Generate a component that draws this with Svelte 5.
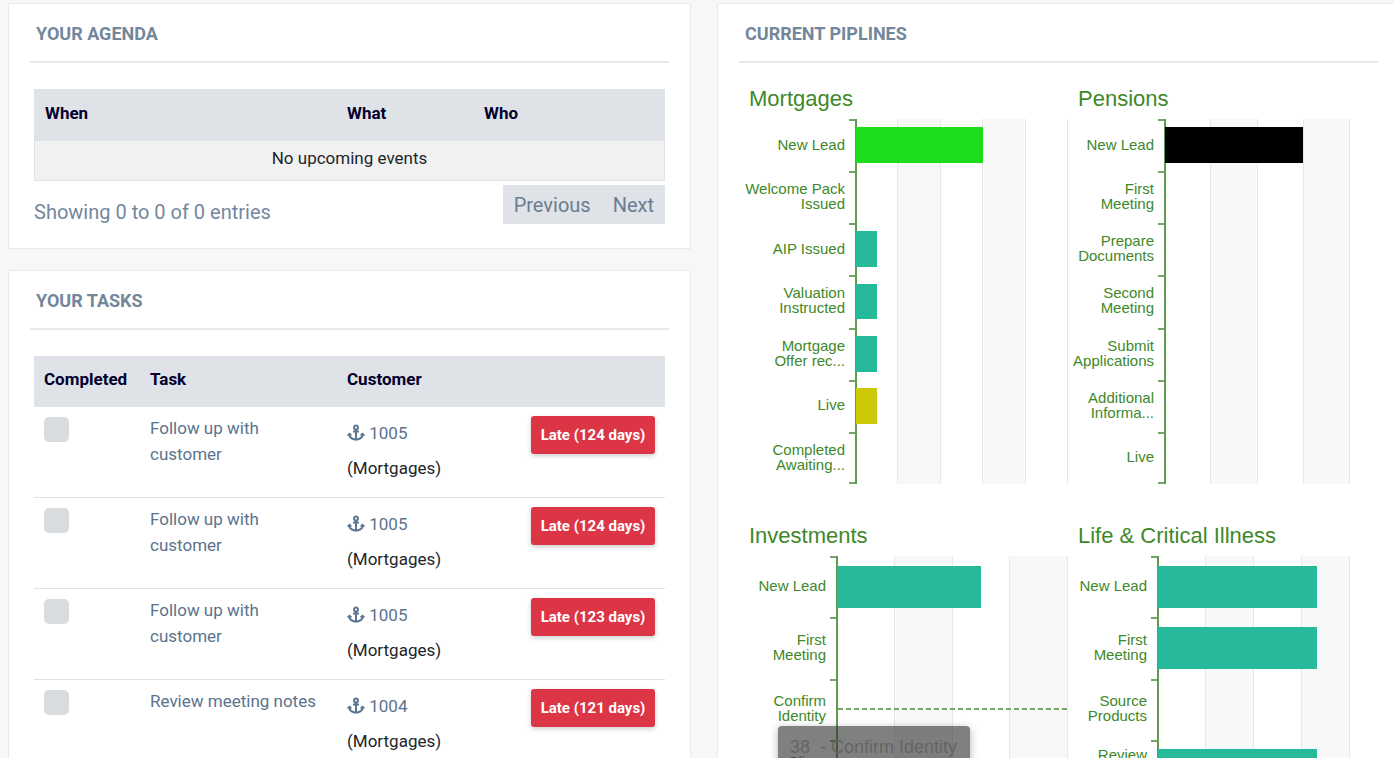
<script lang="ts">
  interface Category {
    label: string[];
    value: number;
    color?: string;
  }

  interface Pipeline {
    title: string;
    // width of the label column, px
    labelWidth: number;
    height: number;
    bands: number;
    max: number;
    categories: Category[];
    hovered?: number;
  }

  const tasks = [
    { id: 1, task: 'Follow up with customer', customer: '1005', type: 'Mortgages', late: 124 },
    { id: 2, task: 'Follow up with customer', customer: '1005', type: 'Mortgages', late: 124 },
    { id: 3, task: 'Follow up with customer', customer: '1005', type: 'Mortgages', late: 123 },
    { id: 4, task: 'Review meeting notes', customer: '1004', type: 'Mortgages', late: 121 }
  ];

  const pipelines: Pipeline[] = [
    {
      title: 'Mortgages',
      labelWidth: 116,
      height: 365,
      bands: 5,
      max: 10,
      categories: [
        { label: ['New Lead'], value: 6, color: '#1cdc1e' },
        { label: ['Welcome Pack', 'Issued'], value: 0 },
        { label: ['AIP Issued'], value: 1 },
        { label: ['Valuation', 'Instructed'], value: 1 },
        { label: ['Mortgage', 'Offer rec...'], value: 1 },
        { label: ['Live'], value: 1, color: '#ccc806' },
        { label: ['Completed', 'Awaiting...'], value: 0 }
      ]
    },
    {
      title: 'Pensions',
      labelWidth: 96,
      height: 365,
      bands: 4,
      max: 4,
      categories: [
        { label: ['New Lead'], value: 3, color: '#000' },
        { label: ['First', 'Meeting'], value: 0 },
        { label: ['Prepare', 'Documents'], value: 0 },
        { label: ['Second', 'Meeting'], value: 0 },
        { label: ['Submit', 'Applications'], value: 0 },
        { label: ['Additional', 'Informa...'], value: 0 },
        { label: ['Live'], value: 0 }
      ]
    },
    {
      title: 'Investments',
      labelWidth: 97,
      height: 245,
      bands: 4,
      max: 8,
      categories: [
        { label: ['New Lead'], value: 5 },
        { label: ['First', 'Meeting'], value: 0 },
        { label: ['Confirm', 'Identity'], value: 0 },
        { label: ['Client', 'Review'], value: 0 }
      ],
      hovered: 2
    },
    {
      title: 'Life & Critical Illness',
      labelWidth: 89,
      height: 245,
      bands: 4,
      max: 12,
      categories: [
        { label: ['New Lead'], value: 10 },
        { label: ['First', 'Meeting'], value: 10 },
        { label: ['Source', 'Products'], value: 0 },
        { label: ['Review', 'with', 'Client'], value: 10 }
      ]
    }
  ];
</script>

<main class="dashboard">
  <div class="column">
    <section class="panel">
      <h2>YOUR AGENDA</h2>
      <div class="panel-body">
        <table class="agenda">
          <thead>
            <tr>
              <th class="col-when">When</th>
              <th class="col-what">What</th>
              <th>Who</th>
            </tr>
          </thead>
          <tbody>
            <tr>
              <td colspan="3">No upcoming events</td>
            </tr>
          </tbody>
        </table>
        <div class="table-footer">
          <span class="info">Showing 0 to 0 of 0 entries</span>
          <nav class="pager" aria-label="Agenda pages">
            <button type="button">Previous</button>
            <button type="button">Next</button>
          </nav>
        </div>
      </div>
    </section>

    <section class="panel">
      <h2>YOUR TASKS</h2>
      <div class="panel-body">
        <table class="tasks">
          <thead>
            <tr>
              <th class="col-done">Completed</th>
              <th class="col-task">Task</th>
              <th class="col-customer">Customer</th>
              <th class="col-late"></th>
            </tr>
          </thead>
          <tbody>
            {#each tasks as item (item.id)}
              <tr>
                <td><input type="checkbox" aria-label="Completed" /></td>
                <td class="task-cell"><a href="#task-{item.id}">{item.task}</a></td>
                <td class="customer-cell">
                  <a href="#customer-{item.customer}">
                    <svg class="anchor" viewBox="0 0 576 512" aria-hidden="true">
                      <path
                        fill="currentColor"
                        d="M12.971 352h32.394C67.172 454.735 181.944 512 288 512c106.229 0 220.853-57.38 242.635-160h32.394c10.691 0 16.045-12.926 8.485-20.485l-67.029-67.029c-4.686-4.686-12.284-4.686-16.971 0l-67.029 67.029c-7.56 7.56-2.206 20.485 8.485 20.485h35.146c-20.29 54.317-84.963 86.588-144.117 94.015V256h52c6.627 0 12-5.373 12-12v-40c0-6.627-5.373-12-12-12h-52v-5.47c37.281-13.226 63.995-48.819 64-90.541C384 43.009 339.889-.999 285.959.017 233.612 1.003 192 43.665 192 95.999c0 41.721 26.714 77.314 64 90.54V192h-52c-6.627 0-12 5.373-12 12v40c0 6.627 5.373 12 12 12h52v190.015c-58.936-7.399-123.82-39.679-144.117-94.015h35.146c10.691 0 16.045-12.926 8.485-20.485l-67.029-67.029c-4.686-4.686-12.284-4.686-16.971 0L4.485 331.515C-3.074 339.074 2.28 352 12.971 352zM288 64c17.645 0 32 14.355 32 32s-14.355 32-32 32-32-14.355-32-32 14.355-32 32-32z"
                      />
                    </svg>
                    {item.customer}
                  </a>
                  <div>({item.type})</div>
                </td>
                <td>
                  <button type="button" class="late">Late ({item.late} days)</button>
                </td>
              </tr>
            {/each}
          </tbody>
        </table>
      </div>
    </section>
  </div>

  <section class="panel">
    <h2>CURRENT PIPLINES</h2>
    <div class="charts">
      {#each pipelines as chart}
        <figure class="chart">
          <figcaption>{chart.title}</figcaption>
          <div class="chart-area" style="height: {chart.height}px">
            <div class="labels" style="width: {chart.labelWidth}px">
              {#each chart.categories as category}
                <div class="label">
                  {#each category.label as line}
                    <span>{line}</span>
                  {/each}
                </div>
              {/each}
            </div>
            <div class="plot">
              <div class="bands">
                {#each { length: chart.bands } as _}
                  <div class="band"></div>
                {/each}
              </div>
              <div class="bars">
                {#each chart.categories as category, i}
                  <div class="slot" class:hovered={chart.hovered === i}>
                    {#if category.value > 0}
                      <div
                        class="bar"
                        style="width: {(category.value / chart.max) * 100}%; background: {category.color ?? '#26b99a'}"
                      ></div>
                    {/if}
                  </div>
                {/each}
              </div>
            </div>
            {#if chart.hovered !== undefined}
              <div class="tooltip">38&nbsp; - Confirm Identity</div>
            {/if}
          </div>
        </figure>
      {/each}
    </div>
  </section>
</main>

<style>
  :global(body) {
    background: #f7f7f7;
  }

  :global(#app) {
    overflow: hidden;
  }

  .dashboard {
    display: grid;
    grid-template-columns: 1fr 1fr;
    gap: 26px;
    box-sizing: border-box;
    height: 100vh;
    /* the right panel bleeds past the window edge */
    margin-right: -6px;
    padding: 3px 0 0 8px;
    overflow: hidden;
    font-family: Roboto, 'Liberation Sans', sans-serif;
    font-size: 17px;
    line-height: 26px;
    color: #212529;
  }

  .column {
    display: flex;
    flex-direction: column;
    gap: 21px;
    min-width: 0;
  }

  .panel {
    min-width: 0;
    padding: 0 21px;
    background: #fff;
    border: 1px solid #e6e9ed;
  }

  h2 {
    margin: 0;
    padding: 17px 6px 14px;
    border-bottom: 2px solid #e6e9ed;
    font-size: 18px;
    font-weight: 700;
    line-height: 26px;
    color: #73879c;
  }

  .panel-body {
    padding: 26px 4px 23px;
  }

  table {
    width: 100%;
    border-collapse: collapse;
    table-layout: fixed;
  }

  th {
    padding: 10px;
    height: 31px;
    background: #dfe2e7;
    color: #03002e;
    font-weight: 700;
    text-align: left;
    vertical-align: top;
  }

  td {
    padding: 10px;
    vertical-align: top;
  }

  .agenda {
    border: 1px solid #dee2e6;
    margin-bottom: 4px;
  }

  .agenda td {
    padding: 4px 10px 9px;
    background: #f1f1f1;
    text-align: center;
  }

  .col-when {
    width: 282px;
  }

  .col-what {
    width: 117px;
  }

  .table-footer {
    display: flex;
    justify-content: space-between;
    font-size: 20px;
    color: #73879c;
  }

  .info {
    padding-top: 14px;
  }

  .pager {
    display: flex;
    align-self: flex-start;
    background: #dfe2e7;
  }

  .pager button {
    padding: 7px 11px 6px;
    border: none;
    background: transparent;
    font: inherit;
    line-height: 26px;
    color: #6b7d92;
    cursor: pointer;
  }

  .col-done {
    width: 86px;
  }

  .col-task {
    width: 177px;
  }

  .col-late {
    width: 124px;
  }

  .tasks tbody tr + tr {
    border-top: 1px solid #dee2e6;
  }

  .tasks a {
    color: #5a738e;
    text-decoration: none;
  }

  .tasks td {
    padding: 9px 10px 11px;
  }

  .tasks .task-cell {
    padding-top: 8px;
  }

  .tasks input {
    appearance: none;
    display: block;
    width: 25px;
    height: 25px;
    margin: 1px 0 0;
    border-radius: 5px;
    background: #d8dcdf;
  }

  .customer-cell {
    line-height: 35px;
  }

  .anchor {
    width: 18px;
    height: 17px;
    vertical-align: -2px;
  }

  .late {
    width: 100%;
    padding: 6px 0;
    border: none;
    border-radius: 3px;
    background: #dc3545;
    box-shadow: 0 2px 5px rgba(0, 0, 0, 0.2);
    color: #fff;
    font: inherit;
    font-size: 15px;
    font-weight: 700;
    white-space: nowrap;
    cursor: pointer;
  }

  .charts {
    display: grid;
    grid-template-columns: 329fr 282fr;
    row-gap: 39px;
    padding: 23px 28px 0 0;
    font-family: 'Liberation Sans', Arial, sans-serif;
    color: #408829;
  }

  .chart {
    min-width: 0;
    margin: 0;
  }

  figcaption {
    padding: 0 10px 7px;
    font-size: 22px;
    white-space: nowrap;
  }

  .chart-area {
    display: flex;
    position: relative;
  }

  .labels {
    display: flex;
    flex-direction: column;
    flex-shrink: 0;
    font-size: 15px;
    line-height: 15px;
    text-align: right;
  }

  .label {
    display: flex;
    flex: 1;
    flex-direction: column;
    justify-content: center;
    box-sizing: border-box;
    padding: 0 10px 2px 0;
    /* axis tick */
    background: linear-gradient(#76a568, #76a568) top right / 6px 2px no-repeat;
  }

  .label:last-child {
    background:
      linear-gradient(#76a568, #76a568) top right / 6px 2px no-repeat,
      linear-gradient(#76a568, #76a568) bottom right / 6px 2px no-repeat;
  }

  .plot {
    display: grid;
    flex: 1;
    min-width: 0;
  }

  .bands,
  .bars {
    display: flex;
    grid-area: 1 / 1;
  }

  .bands {
    border-right: 1px solid #e8e8e8;
  }

  .band {
    flex: 1;
    border-left: 1px solid #e8e8e8;
  }

  .band:nth-child(even) {
    background: #f8f8f8;
  }

  .bars {
    flex-direction: column;
    border-left: 2px solid #5f9a50;
  }

  .slot {
    display: flex;
    flex: 1;
    align-items: center;
  }

  .slot.hovered {
    background: repeating-linear-gradient(90deg, #76a568 0 5px, transparent 5px 8px) center / 100% 2px no-repeat;
  }

  .bar {
    height: 69%;
    margin-left: -1px;
  }

  .tooltip {
    position: absolute;
    top: 170px;
    left: 39px;
    box-sizing: border-box;
    width: 192px;
    height: 60px;
    padding: 8px 12px;
    border-radius: 4px;
    background: rgba(50, 50, 50, 0.62);
    box-shadow: 0 2px 8px rgba(0, 0, 0, 0.3);
    color: #646464;
    font-size: 18px;
    white-space: nowrap;
  }
</style>
